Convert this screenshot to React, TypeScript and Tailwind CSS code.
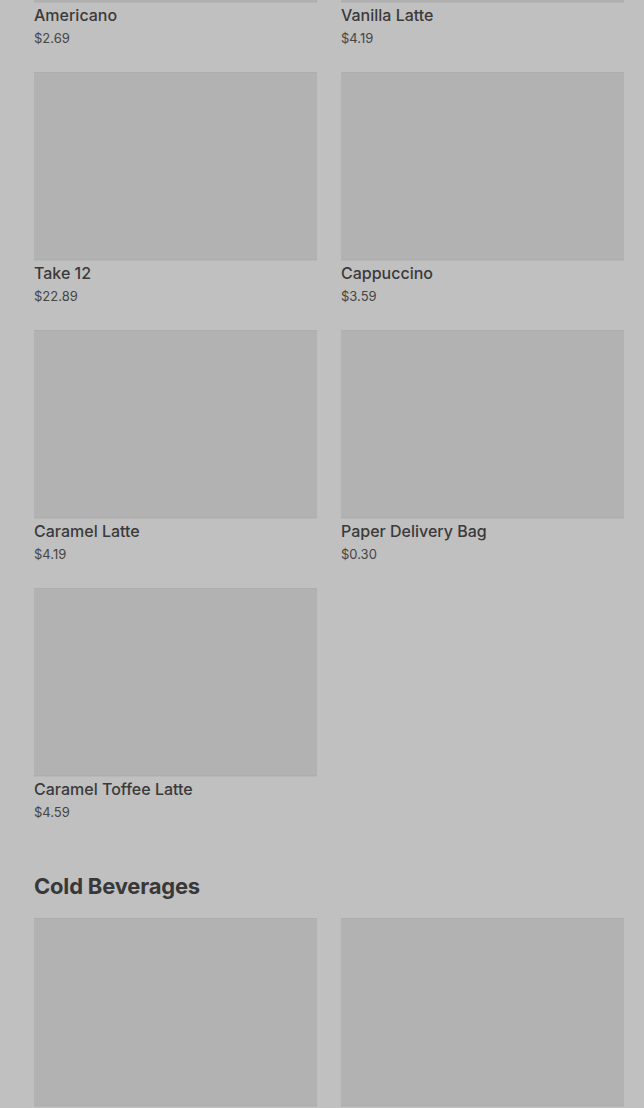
import React from "react";

type Item = { name: string; price: string };

const hot: Item[] = [
  { name: "Americano", price: "$2.69" },
  { name: "Vanilla Latte", price: "$4.19" },
  { name: "Take 12", price: "$22.89" },
  { name: "Cappuccino", price: "$3.59" },
  { name: "Caramel Latte", price: "$4.19" },
  { name: "Paper Delivery Bag", price: "$0.30" },
  { name: "Caramel Toffee Latte", price: "$4.59" },
];

const cold: Item[] = [
  { name: "", price: "" },
  { name: "", price: "" },
];

function Card({ item }: { item: Item }) {
  return (
    <div className="flex flex-col">
      <div className="h-[188px] bg-[#b2b2b2] border-t border-b border-[#adadad] shadow-[0_1px_1px_rgba(0,0,0,0.04)]" />
      <div className="pt-[2px] text-[16px] leading-[22px] font-medium text-[#3a3a3a]">{item.name}</div>
      <div className="text-[13px] leading-[24px] text-[#454545]">{item.price}</div>
    </div>
  );
}

export default function App() {
  return (
    <div
      className="w-[644px] h-[1108px] overflow-hidden bg-[#c0c0c0]"
      style={{ fontFamily: "Inter, 'Noto Sans', sans-serif" }}
    >
      <div className="mt-[-186px] pl-[34px] pr-[20px]">
        <div className="grid grid-cols-2 gap-x-[24px] gap-y-[22px]">
          {hot.map((it, i) => (
            <Card key={i} item={it} />
          ))}
        </div>
        <h2 className="mt-[46px] text-[22px] leading-[32px] font-bold tracking-[-0.2px] text-[#383838]">
          Cold Beverages
        </h2>
        <div className="mt-[16px] grid grid-cols-2 gap-x-[24px] gap-y-[22px]">
          {cold.map((it, i) => (
            <Card key={i} item={it} />
          ))}
        </div>
      </div>
    </div>
  );
}
